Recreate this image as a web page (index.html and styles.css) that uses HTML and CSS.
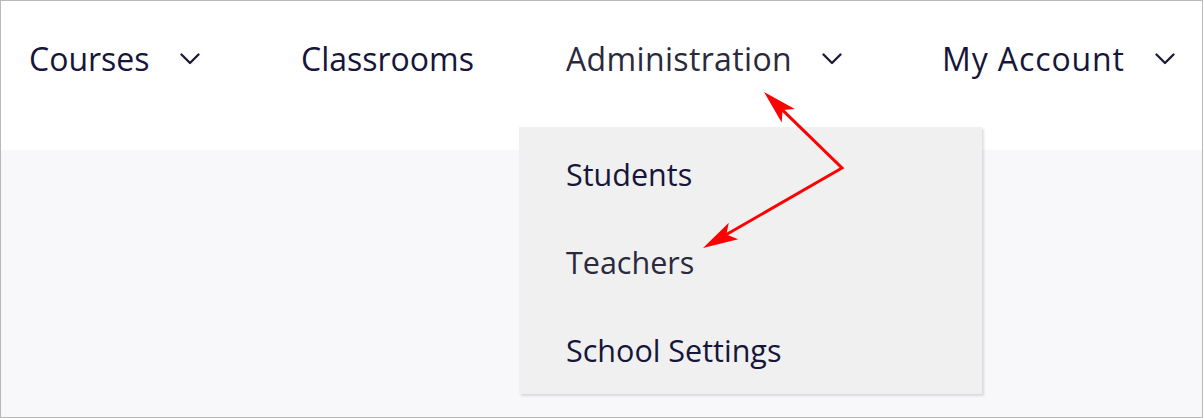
FILE: index.html
```html
<!DOCTYPE html>
<html lang="en">
<head>
<meta charset="utf-8">
<title>Navigation</title>
<link rel="stylesheet" href="styles.css">
</head>
<body>
<div class="frame">
  <header class="topbar">
    <nav class="nav">
      <div class="nav-item">
        <span class="nav-label">Courses</span>
        <svg class="chev" viewBox="0 0 20 12" width="20" height="12"><polyline points="1.5,1.5 10,10 18.5,1.5"/></svg>
      </div>
      <div class="nav-item">
        <span class="nav-label">Classrooms</span>
      </div>
      <div class="nav-item nav-item--open">
        <span class="nav-label nav-label--active">Administration</span>
        <svg class="chev" viewBox="0 0 20 12" width="20" height="12"><polyline points="1.5,1.5 10,10 18.5,1.5"/></svg>
        <ul class="dropdown">
          <li class="dropdown-item">Students</li>
          <li class="dropdown-item dropdown-item--muted">Teachers</li>
          <li class="dropdown-item">School Settings</li>
        </ul>
      </div>
      <div class="nav-item">
        <span class="nav-label nav-label--account">My Account</span>
        <svg class="chev" viewBox="0 0 20 12" width="20" height="12"><polyline points="1.5,1.5 10,10 18.5,1.5"/></svg>
      </div>
    </nav>
  </header>
  <main class="content"></main>
  <svg class="annot" viewBox="0 0 1204 418" width="1204" height="418">
    <polyline class="annot-line" points="782.6,110.1 842,168 726.4,234.5"/>
    <polygon class="annot-head" points="764,92 794.9,108.9 782.6,110.1 781.7,122.5"/>
    <polygon class="annot-head" points="703,248 728.8,222.8 726.4,234.5 738.2,239.2"/>
  </svg>
</div>
</body>
</html>
```

FILE: styles.css
```css
html, body {
  margin: 0;
  padding: 0;
  background: #ffffff;
}

.frame {
  position: relative;
  width: 1203px;
  height: 418px;
  box-sizing: border-box;
  border: 1px solid #b9b9b9;
  background: #f8f8fa;
  display: flex;
  flex-direction: column;
  overflow: hidden;
  font-family: "Open Sans", "Noto Sans", sans-serif;
}

.topbar {
  height: 149px;
  background: #ffffff;
  flex: none;
}

.nav {
  display: grid;
  grid-template-columns: 272px 265px 376px auto;
  align-items: start;
  padding: 36px 0 0 28px;
}

.nav-item {
  position: relative;
  display: flex;
  align-items: center;
  height: 44px;
}

.nav-label {
  font-size: 32px;
  line-height: 44px;
  color: #16163a;
  white-space: nowrap;
}

.nav-label--active {
  color: #2a2a3c;
  letter-spacing: 0.35px;
}

.nav-label--account {
  letter-spacing: 0.9px;
}

.chev {
  margin-left: 30px;
  margin-top: -1px;
  fill: none;
  stroke: #1b1b36;
  stroke-width: 2.3;
  stroke-linecap: round;
  stroke-linejoin: round;
}

.dropdown {
  position: absolute;
  top: calc(100% + 46px);
  left: -47px;
  width: 463px;
  margin: 0;
  padding: 3px 0 0 0;
  list-style: none;
  background: #f0f0f0;
  box-shadow: 2px 2px 2px rgba(0, 0, 0, 0.12);
  z-index: 2;
}

.dropdown-item {
  height: 88px;
  line-height: 88px;
  padding-left: 47px;
  font-size: 30.5px;
  color: #16163a;
  white-space: nowrap;
}

.dropdown-item--muted {
  color: #2a2a3c;
}

.content {
  flex: 1;
  background: #f8f8fa;
}

.annot {
  position: absolute;
  left: -1px;
  top: -1px;
  pointer-events: none;
  z-index: 3;
}

.annot-line {
  fill: none;
  stroke: #ff0000;
  stroke-width: 3;
  stroke-linejoin: miter;
}

.annot-head {
  fill: #ff0000;
}
```
